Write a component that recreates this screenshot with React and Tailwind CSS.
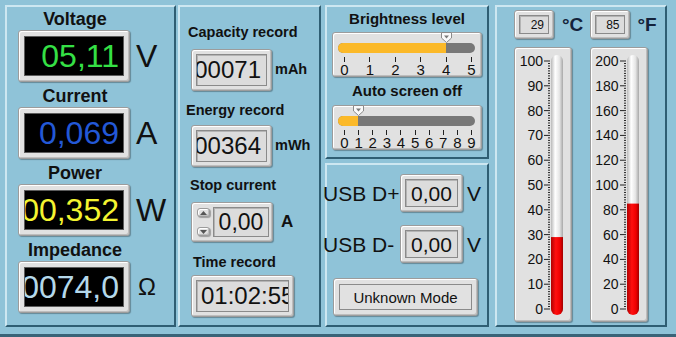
import React from 'react';

// shared bevel styles
const frame =
  'rounded-[3px] border border-[#9c9c9c] bg-[#e1e1e1] shadow-[inset_1px_1px_0_#ffffff,inset_-1px_-1px_0_#bdbdbd,1px_1px_1px_rgba(0,0,0,0.3)]';
const well = 'border border-[#8a8a8a] bg-[#dcdcdc] shadow-[inset_1px_1px_0_#b4b4b4]';

const Panel = ({ className = '', children }) => (
  <div
    className={`border-2 border-t-[#cde7f1] border-l-[#cde7f1] border-r-[#2f5e73] border-b-[#2f5e73] ${className}`}
  >
    {children}
  </div>
);

const meters = [
  { label: 'Voltage', value: '05,11', unit: 'V', color: 'text-[#35e045]', unitClass: 'text-[32px]' },
  { label: 'Current', value: '0,069', unit: 'A', color: 'text-[#2358d6]', unitClass: 'text-[32px]' },
  { label: 'Power', value: '00,352', unit: 'W', color: 'text-[#f4f430]', unitClass: 'text-[32px]' },
  { label: 'Impedance', value: '0074,0', unit: 'Ω', color: 'text-[#b4d8ea]', unitClass: 'text-[24px] ml-[8px]' },
];

function Meter({ label, value, unit, color, unitClass }) {
  return (
    <div className="flex flex-col">
      <div className="w-[136px] text-center text-[18px] font-bold leading-[20px] text-[#111]">{label}</div>
      <div className="mt-[1px] flex items-center">
        <div className={`ml-[11px] h-[52px] w-[112px] p-[5px] ${frame}`}>
          <div className="flex h-full items-center justify-end overflow-hidden border border-[#5c5c5c] bg-black pr-[4px]">
            <span className={`whitespace-nowrap text-[32px] leading-none ${color}`}>{value}</span>
          </div>
        </div>
        <span className={`ml-[6px] leading-none text-[#111] ${unitClass}`}>{unit}</span>
      </div>
    </div>
  );
}

function RecordBox({ value, unit }) {
  return (
    <div className="flex items-center">
      <div className={`h-[42px] w-[81px] p-[4px] ${frame}`}>
        <div className={`flex h-full items-center justify-end overflow-hidden pr-[5px] ${well}`}>
          <span className="whitespace-nowrap text-[24px] leading-none text-[#111]">{value}</span>
        </div>
      </div>
      <span className="ml-[3px] text-[14.5px] font-bold text-[#111]">{unit}</span>
    </div>
  );
}

const Arrow = ({ down }) => (
  <div className={`flex h-[9px] w-[13px] items-center justify-center ${frame}`}>
    <svg width="7" height="4" viewBox="0 0 7 4">
      <path d={down ? 'M0 0 H7 L3.5 4 Z' : 'M0 4 H7 L3.5 0 Z'} fill="#555" />
    </svg>
  </div>
);

function Slider({ max, value }) {
  const x = (i) => 11 + (i * 127) / max;
  const ticks = Array.from({ length: max + 1 }, (_, i) => i);
  return (
    <div className={`relative h-[45px] w-[150px] ${frame}`}>
      <div className="absolute left-[5px] top-[10px] h-[10px] w-[137px] overflow-hidden rounded-full bg-[#787878]">
        <div className="h-full bg-[#fbb929]" style={{ width: x(value) - 5 }} />
      </div>
      {ticks.map((i) => (
        <React.Fragment key={i}>
          <div className="absolute top-[24px] h-[5px] w-[1px] bg-[#222]" style={{ left: x(i) }} />
          <span
            className="absolute top-[29px] w-[14px] -translate-x-1/2 text-center text-[15px] leading-[15px] text-[#111]"
            style={{ left: x(i) + 0.5 }}
          >
            {i}
          </span>
        </React.Fragment>
      ))}
      <svg className="absolute top-[-1px]" style={{ left: x(value) - 5 }} width="11" height="11" viewBox="0 0 11 11">
        <path d="M0.5 0.5 H10.5 V6 L5.5 10.5 L0.5 6 Z" fill="#fafafa" stroke="#8a8a8a" />
        <path d="M3 3.5 H8 L5.5 6.5 Z" fill="#7a7a7a" />
      </svg>
    </div>
  );
}

function UsbRow({ label, className = '' }) {
  return (
    <div className={`-ml-[4px] flex items-center ${className}`}>
      <span className="w-[77px] whitespace-nowrap text-[21px] leading-none text-[#111]">{label}</span>
      <div className={`h-[38px] w-[63px] p-[4px] ${frame}`}>
        <div className={`flex h-full items-center justify-center ${well}`}>
          <span className="text-[21px] leading-none text-[#111]">0,00</span>
        </div>
      </div>
      <span className="ml-[4px] text-[21px] leading-none text-[#111]">V</span>
    </div>
  );
}

function Gauge({ id, max, value }) {
  const top = 13;
  const len = 248;
  const y = (v) => top + (1 - v / max) * len;
  const labels = Array.from({ length: 11 }, (_, i) => max - (i * max) / 10);
  const minors = Array.from({ length: 101 }, (_, i) => top + (i * len) / 100);
  const fillTop = y(value);
  return (
    <div className={`relative mt-[8px] h-[275px] w-[58px] ${frame}`}>
      <svg className="absolute left-0 top-0" width="56" height="273" viewBox="0 0 56 273">
        <defs>
          <linearGradient id={`glass-${id}`} x1="0" x2="1" y1="0" y2="0">
            <stop offset="0" stopColor="#b9b9b9" />
            <stop offset="0.35" stopColor="#ffffff" />
            <stop offset="0.7" stopColor="#e6e6e6" />
            <stop offset="1" stopColor="#a8a8a8" />
          </linearGradient>
          <linearGradient id={`red-${id}`} x1="0" x2="1" y1="0" y2="0">
            <stop offset="0" stopColor="#b00000" />
            <stop offset="0.4" stopColor="#ff1010" />
            <stop offset="0.75" stopColor="#ee0000" />
            <stop offset="1" stopColor="#a00000" />
          </linearGradient>
          <clipPath id={`tube-${id}`}>
            <rect x="36" y="7" width="12" height="260" rx="6" />
          </clipPath>
        </defs>
        {minors.map((my, i) => (
          <rect key={i} x={i % 10 === 0 ? 29 : 33} y={my - 0.5} width={i % 10 === 0 ? 6 : 2} height="1" fill="#222" />
        ))}
        <rect x="36" y="7" width="12" height="260" rx="6" fill={`url(#glass-${id})`} />
        <rect
          x="36"
          y={fillTop}
          width="12"
          height={267 - fillTop}
          fill={`url(#red-${id})`}
          clipPath={`url(#tube-${id})`}
        />
      </svg>
      {labels.map((v) => (
        <span
          key={v}
          className="absolute right-[28px] text-[14px] leading-[14px] text-[#111]"
          style={{ top: y(v) - 7 }}
        >
          {v}
        </span>
      ))}
    </div>
  );
}

const gauges = [
  { id: 'c', reading: '29', unit: '°C', max: 100, value: 29 },
  { id: 'f', reading: '85', unit: '°F', max: 200, value: 85 },
];

export default function App() {
  return (
    <div className="h-[337px] w-[676px] border-b-[3px] border-[#3a6478] bg-[#8fc3d8] pl-[5px] pt-[5px] font-['Liberation_Sans',Arial,sans-serif]">
      <div className="flex">
        {/* readings */}
        <Panel className="flex h-[322px] w-[171px] flex-col gap-[4px] pt-[2px]">
          {meters.map((m) => (
            <Meter key={m.label} {...m} />
          ))}
        </Panel>

        {/* records */}
        <Panel className="ml-[2px] flex h-[322px] w-[143px] flex-col">
          <div className="ml-[8px] mt-[16px] text-[14.5px] font-bold leading-[18px] text-[#111]">Capacity record</div>
          <div className="ml-[11px] mt-[8px]">
            <RecordBox value="00071" unit="mAh" />
          </div>
          <div className="ml-[6px] mt-[10px] text-[14.5px] font-bold leading-[18px] text-[#111]">Energy record</div>
          <div className="ml-[11px] mt-[6px]">
            <RecordBox value="00364" unit="mWh" />
          </div>
          <div className="ml-[10px] mt-[9px] text-[14.5px] font-bold leading-[18px] text-[#111]">Stop current</div>
          <div className="ml-[11px] mt-[8px] flex items-center">
            <div className={`flex h-[40px] w-[82px] items-stretch gap-[3px] py-[4px] pl-[5px] pr-[3px] ${frame}`}>
              <div className="flex flex-col justify-between py-[1px]">
                <Arrow />
                <Arrow down />
              </div>
              <div className={`flex flex-1 items-center justify-center ${well}`}>
                <span className="text-[23px] leading-none text-[#111]">0,00</span>
              </div>
            </div>
            <span className="ml-[8px] text-[17px] font-bold text-[#111]">A</span>
          </div>
          <div className="ml-[13px] mt-[11px] text-[14.5px] font-bold leading-[18px] text-[#111]">Time record</div>
          <div className={`ml-[11px] mt-[4px] h-[42px] w-[103px] p-[4px] ${frame}`}>
            <div className={`flex h-full items-center overflow-hidden pl-[4px] ${well}`}>
              <span className="whitespace-nowrap text-[24px] leading-none text-[#111]">01:02:55</span>
            </div>
          </div>
        </Panel>

        {/* settings + usb */}
        <div className="ml-[4px] flex flex-col">
          <Panel className="flex h-[154px] w-[164px] flex-col items-center">
            <div className="mt-[3px] text-[15px] font-bold leading-[18px] text-[#111]">Brightness level</div>
            <div className="mt-[4px]">
              <Slider max={5} value={4} />
            </div>
            <div className="mt-[5px] text-[15px] font-bold leading-[18px] text-[#111]">Auto screen off</div>
            <div className="mt-[5px]">
              <Slider max={9} value={1} />
            </div>
          </Panel>
          <Panel className="mt-[4px] flex h-[164px] w-[164px] flex-col">
            <UsbRow label="USB D+" className="mt-[9px]" />
            <UsbRow label="USB D-" className="mt-[13px]" />
            <div className={`ml-[6px] mt-[15px] h-[38px] w-[145px] p-[5px] ${frame}`}>
              <div className="flex h-full items-center justify-center border border-[#8a8a8a]">
                <span className="text-[15px] leading-none text-[#111]">Unknown Mode</span>
              </div>
            </div>
          </Panel>
        </div>

        {/* temperature */}
        <Panel className="ml-[6px] flex h-[322px] w-[172px] pl-[17px]">
          {gauges.map((g) => (
            <div key={g.id} className="flex w-[76px] flex-col">
              <div className="mt-[3px] flex items-center">
                <div className={`h-[29px] w-[40px] p-[4px] ${frame}`}>
                  <div className={`flex h-full items-center justify-end pr-[4px] ${well}`}>
                    <span className="text-[12px] leading-none text-[#111]">{g.reading}</span>
                  </div>
                </div>
                <span className="ml-[8px] text-[19px] font-bold leading-none text-[#14233b]">{g.unit}</span>
              </div>
              <Gauge id={g.id} max={g.max} value={g.value} />
            </div>
          ))}
        </Panel>
      </div>
    </div>
  );
}
